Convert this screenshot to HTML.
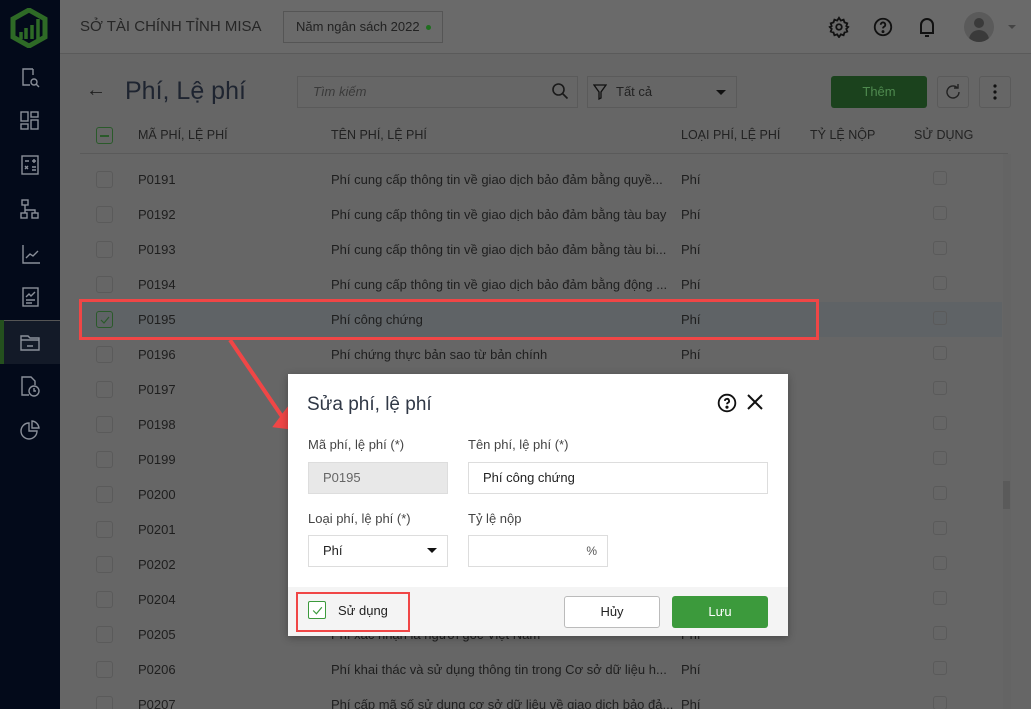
<!DOCTYPE html>
<html><head><meta charset="utf-8"><style>
*{box-sizing:border-box;margin:0;padding:0}
html,body{width:1031px;height:709px;overflow:hidden}
body{background:#666;font-family:"Liberation Sans",sans-serif;position:relative;color:#1e1e1e}
.a{position:absolute}
.sb{left:0;top:0;width:60px;height:709px;background:#030a1a}
.ic{position:absolute;left:19px;width:22px;height:22px}
.hdr{left:60px;top:0;width:971px;height:54px;background:#6a6a6a;border-bottom:1px solid #5a5a5a}
.cb{position:absolute;width:17px;height:17px;border:1px solid #5a5a5a;border-radius:3px}
.row{position:absolute;left:80px;width:922px;height:35px;font-size:13px;line-height:35px}
.row span{position:absolute}
.th{font-size:12.5px;color:#222;position:absolute;top:128px}
.m{left:288px;top:374px;width:500px;height:262px;background:#fff;box-shadow:0 2px 8px rgba(0,0,0,.3)}
.lbl{position:absolute;font-size:13px;color:#444}
.inp{position:absolute;height:32px;border:1px solid #ddd;font-size:13px;line-height:30px;padding-left:14px;color:#222}
</style></head><body>
<div class="a sb">
<svg class="a" style="left:10px;top:8px" width="38" height="40" viewBox="0 0 38 40"><path d="M19 2 L35 11 L35 29 L19 38 L3 29 L3 11 Z" fill="none" stroke="#2e6a26" stroke-width="5"/><path d="M11 31V24M16 31V20M22 31V17M28 31V11" stroke="#2e6a26" stroke-width="3.5"/></svg>
<svg class="ic" style="top:66px" viewBox="0 0 22 22" fill="none" stroke="#8a8f99" stroke-width="1.4"><path d="M14 3H4v16h7"/><path d="M14 3v6"/><circle cx="15" cy="16" r="3"/><path d="M17 18l3 3"/></svg>
<svg class="ic" style="top:110px" viewBox="0 0 22 22" fill="none" stroke="#8a8f99" stroke-width="1.4"><rect x="2" y="2" width="7" height="9"/><rect x="12" y="2" width="7" height="5"/><rect x="2" y="14" width="7" height="5"/><rect x="12" y="10" width="7" height="9"/></svg>
<svg class="ic" style="top:154px" viewBox="0 0 22 22" fill="none" stroke="#8a8f99" stroke-width="1.4"><rect x="3" y="2" width="16" height="18"/><path d="M6 7h4M13 7h4M15 5v4M6 12l3 3M9 12l-3 3M13 13h4M13 16h4"/></svg>
<svg class="ic" style="top:198px" viewBox="0 0 22 22" fill="none" stroke="#8a8f99" stroke-width="1.4"><rect x="3" y="2" width="6" height="5"/><rect x="2" y="15" width="6" height="5"/><rect x="13" y="15" width="6" height="5"/><path d="M6 7v5h10v3M6 12v3"/></svg>
<svg class="ic" style="top:243px" viewBox="0 0 22 22" fill="none" stroke="#8a8f99" stroke-width="1.4"><path d="M4 2v18h17"/><path d="M7 15l4-4 3 2 5-5"/></svg>
<svg class="ic" style="top:286px" viewBox="0 0 22 22" fill="none" stroke="#8a8f99" stroke-width="1.4"><rect x="4" y="2" width="15" height="18"/><path d="M7 11l3-3 2 2 4-4M7 14h9M7 17h6"/></svg>
<div class="a" style="left:0;top:320px;width:60px;height:44px;background:#131a28;border-top:1px solid #555"></div>
<div class="a" style="left:0;top:320px;width:4px;height:44px;background:#24501e"></div>
<svg class="ic" style="top:331px" viewBox="0 0 22 22" fill="none" stroke="#8a8f99" stroke-width="1.4"><path d="M2 5h7l2 2h9v12H2z"/><path d="M2 9h18M8 15h6"/></svg>
<svg class="ic" style="top:375px" viewBox="0 0 22 22" fill="none" stroke="#8a8f99" stroke-width="1.4"><path d="M10 20H3V2h9l4 4v4"/><circle cx="15" cy="16" r="5"/><path d="M15 13v3h2"/></svg>
<svg class="ic" style="top:419px" viewBox="0 0 22 22" fill="none" stroke="#8a8f99" stroke-width="1.4"><path d="M10 4a8 8 0 1 0 8 8h-8z"/><path d="M13 2a8 8 0 0 1 7 7h-7z"/></svg>
</div>
<div class="a hdr">
<div class="a" style="left:20px;top:18px;font-size:15px;color:#262626">SỞ TÀI CHÍNH TỈNH MISA</div>
<div class="a" style="left:223px;top:11px;width:160px;height:32px;border:1px solid #555;font-size:13px;line-height:30px;padding-left:12px;color:#222">Năm ngân sách 2022 <span style="display:inline-block;width:5px;height:5px;border-radius:50%;background:#1e6e1e;margin-left:3px;vertical-align:middle"></span></div>
<svg class="a" style="left:768px;top:16px" width="22" height="22" viewBox="0 0 24 24" fill="none" stroke="#111" stroke-width="2"><circle cx="12" cy="12" r="3"/><path d="M12 2l2 3 3-1 1 3 3 1-1 3 2 1-2 2 1 3-3 1-1 3-3-1-2 3-2-3-3 1-1-3-3-1 1-3-2-2 2-1-1-3 3-1 1-3 3 1z"/></svg>
<svg class="a" style="left:812px;top:16px" width="22" height="22" viewBox="0 0 24 24" fill="none" stroke="#111" stroke-width="2"><circle cx="12" cy="12" r="9"/><path d="M9.5 9.5a2.5 2.5 0 1 1 3.5 2.3c-.7.4-1 .9-1 1.7"/><circle cx="12" cy="17" r=".6" fill="#111"/></svg>
<svg class="a" style="left:857px;top:15px" width="20" height="24" viewBox="0 0 20 24" fill="none" stroke="#111" stroke-width="2"><path d="M4 18V10a6 6 0 0 1 12 0v8H3h14"/><path d="M8 21h4"/></svg>
<div class="a" style="left:904px;top:12px;width:30px;height:30px;border-radius:50%;background:#5a5a5a;overflow:hidden"><div class="a" style="left:10px;top:6px;width:10px;height:10px;border-radius:50%;background:#3a3a3a"></div><div class="a" style="left:5px;top:18px;width:20px;height:14px;border-radius:10px 10px 0 0;background:#3a3a3a"></div></div>
<div class="a" style="left:948px;top:25px;border:4px solid transparent;border-top:4px solid #444"></div>
</div>
<div class="a" style="left:86px;top:79px;font-size:20px;color:#1e1e1e">←</div>
<div class="a" style="left:125px;top:77px;font-size:25px;color:#1e2430">Phí, Lệ phí</div>
<div class="a" style="left:297px;top:76px;width:281px;height:32px;border:1px solid #5a5a5a;font-size:13px;font-style:italic;color:#3a3a3a;line-height:30px;padding-left:15px">Tìm kiếm</div>
<svg class="a" style="left:551px;top:82px" width="18" height="18" viewBox="0 0 18 18" fill="none" stroke="#1a1a1a" stroke-width="1.6"><circle cx="7.5" cy="7.5" r="5.5"/><path d="M11.5 11.5l5 5"/></svg>
<div class="a" style="left:587px;top:76px;width:150px;height:32px;border:1px solid #5a5a5a;font-size:13px;color:#222;line-height:30px;padding-left:28px">Tất cả</div>
<svg class="a" style="left:593px;top:84px" width="14" height="16" viewBox="0 0 14 16" fill="none" stroke="#111" stroke-width="1.3"><path d="M1 1h12L8 8v6L6 15V8z"/></svg>
<div class="a" style="left:716px;top:90px;border:5px solid transparent;border-top:5px solid #111"></div>
<div class="a" style="left:831px;top:76px;width:96px;height:32px;background:#1b421d;border-radius:3px;color:#4f8a4f;font-size:13px;text-align:center;line-height:32px">Thêm</div>
<div class="a" style="left:937px;top:76px;width:32px;height:32px;border:1px solid #5a5a5a;border-radius:3px"></div>
<svg class="a" style="left:944px;top:83px" width="18" height="18" viewBox="0 0 18 18" fill="none" stroke="#222" stroke-width="1.4"><path d="M15 9a6 6 0 1 1-2-4.5"/><path d="M14 1v4h-4"/></svg>
<div class="a" style="left:979px;top:76px;width:32px;height:32px;border:1px solid #5a5a5a;border-radius:3px"></div>
<svg class="a" style="left:992px;top:83px" width="6" height="18" viewBox="0 0 6 18" fill="#111"><circle cx="3" cy="3" r="1.6"/><circle cx="3" cy="9" r="1.6"/><circle cx="3" cy="15" r="1.6"/></svg>
<div class="cb" style="left:96px;top:127px;border:1px solid #2a5a2a"><div class="a" style="left:3px;top:7px;width:9px;height:1.5px;background:#2a5a2a"></div></div>
<div class="th" style="left:138px">MÃ PHÍ, LỆ PHÍ</div>
<div class="th" style="left:331px">TÊN PHÍ, LỆ PHÍ</div>
<div class="th" style="left:681px">LOẠI PHÍ, LỆ PHÍ</div>
<div class="th" style="left:810px">TỶ LỆ NỘP</div>
<div class="th" style="left:914px">SỬ DỤNG</div>
<div class="a" style="left:80px;top:153px;width:928px;height:1px;background:#5a5a5a"></div>
<div class="a" style="left:1003px;top:154px;width:8px;height:555px;background:#646464"></div>
<div class="a" style="left:1003px;top:481px;width:7px;height:28px;background:#5a5a5a"></div>
<div class="a" style="left:80px;top:302px;width:922px;height:35px;background:#5f6366"></div>
<div class="row" style="top:162px"><div class="cb" style="left:16px;top:9px"></div><span style="left:58px">P0191</span><span style="left:251px">Phí cung cấp thông tin về giao dịch bảo đảm bằng quyề...</span><span style="left:601px">Phí</span><div class="cb" style="left:853px;top:9px;width:14px;height:14px"></div></div>
<div class="row" style="top:197px"><div class="cb" style="left:16px;top:9px"></div><span style="left:58px">P0192</span><span style="left:251px">Phí cung cấp thông tin về giao dịch bảo đảm bằng tàu bay</span><span style="left:601px">Phí</span><div class="cb" style="left:853px;top:9px;width:14px;height:14px"></div></div>
<div class="row" style="top:232px"><div class="cb" style="left:16px;top:9px"></div><span style="left:58px">P0193</span><span style="left:251px">Phí cung cấp thông tin về giao dịch bảo đảm bằng tàu bi...</span><span style="left:601px">Phí</span><div class="cb" style="left:853px;top:9px;width:14px;height:14px"></div></div>
<div class="row" style="top:267px"><div class="cb" style="left:16px;top:9px"></div><span style="left:58px">P0194</span><span style="left:251px">Phí cung cấp thông tin về giao dịch bảo đảm bằng động ...</span><span style="left:601px">Phí</span><div class="cb" style="left:853px;top:9px;width:14px;height:14px"></div></div>
<div class="row" style="top:302px"><div class="cb" style="left:16px;top:9px;border-color:#2a5a2a"><svg class="a" style="left:2px;top:2px" width="12" height="12" viewBox="0 0 12 12" fill="none" stroke="#2a5a2a" stroke-width="1.2"><path d="M2 6l3 3 5-6"/></svg></div><span style="left:58px">P0195</span><span style="left:251px">Phí công chứng</span><span style="left:601px">Phí</span><div class="cb" style="left:853px;top:9px;width:14px;height:14px"></div></div>
<div class="row" style="top:337px"><div class="cb" style="left:16px;top:9px"></div><span style="left:58px">P0196</span><span style="left:251px">Phí chứng thực bản sao từ bản chính</span><span style="left:601px">Phí</span><div class="cb" style="left:853px;top:9px;width:14px;height:14px"></div></div>
<div class="row" style="top:372px"><div class="cb" style="left:16px;top:9px"></div><span style="left:58px">P0197</span><div class="cb" style="left:853px;top:9px;width:14px;height:14px"></div></div>
<div class="row" style="top:407px"><div class="cb" style="left:16px;top:9px"></div><span style="left:58px">P0198</span><div class="cb" style="left:853px;top:9px;width:14px;height:14px"></div></div>
<div class="row" style="top:442px"><div class="cb" style="left:16px;top:9px"></div><span style="left:58px">P0199</span><div class="cb" style="left:853px;top:9px;width:14px;height:14px"></div></div>
<div class="row" style="top:477px"><div class="cb" style="left:16px;top:9px"></div><span style="left:58px">P0200</span><div class="cb" style="left:853px;top:9px;width:14px;height:14px"></div></div>
<div class="row" style="top:512px"><div class="cb" style="left:16px;top:9px"></div><span style="left:58px">P0201</span><div class="cb" style="left:853px;top:9px;width:14px;height:14px"></div></div>
<div class="row" style="top:547px"><div class="cb" style="left:16px;top:9px"></div><span style="left:58px">P0202</span><div class="cb" style="left:853px;top:9px;width:14px;height:14px"></div></div>
<div class="row" style="top:582px"><div class="cb" style="left:16px;top:9px"></div><span style="left:58px">P0204</span><div class="cb" style="left:853px;top:9px;width:14px;height:14px"></div></div>
<div class="row" style="top:617px"><div class="cb" style="left:16px;top:9px"></div><span style="left:58px">P0205</span><span style="left:251px">Phí xác nhận là người gốc Việt Nam</span><span style="left:601px">Phí</span><div class="cb" style="left:853px;top:9px;width:14px;height:14px"></div></div>
<div class="row" style="top:652px"><div class="cb" style="left:16px;top:9px"></div><span style="left:58px">P0206</span><span style="left:251px">Phí khai thác và sử dụng thông tin trong Cơ sở dữ liệu h...</span><span style="left:601px">Phí</span><div class="cb" style="left:853px;top:9px;width:14px;height:14px"></div></div>
<div class="row" style="top:687px"><div class="cb" style="left:16px;top:9px"></div><span style="left:58px">P0207</span><span style="left:251px">Phí cấp mã số sử dụng cơ sở dữ liệu về giao dịch bảo đả...</span><span style="left:601px">Phí</span><div class="cb" style="left:853px;top:9px;width:14px;height:14px"></div></div>
<div class="a" style="left:79px;top:299px;width:740px;height:41px;border:3px solid #f04646"></div>
<svg class="a" style="left:225px;top:338px" width="70" height="92" viewBox="0 0 70 92"><path d="M5 2L58 80" stroke="#f04646" stroke-width="4"/><path d="M50 88L66 90L62 72Z" fill="#f04646" stroke="#f04646" stroke-width="3"/></svg>
<div class="a m">
<div class="a" style="left:19px;top:20px;font-size:19px;color:#303846">Sửa phí, lệ phí</div>
<svg class="a" style="left:429px;top:19px" width="20" height="20" viewBox="0 0 24 24" fill="none" stroke="#111" stroke-width="2.2"><circle cx="12" cy="12" r="10"/><path d="M9.5 9.5a2.5 2.5 0 1 1 3.5 2.3c-.7.4-1 .9-1 1.7"/><circle cx="12" cy="17" r=".8" fill="#111"/></svg>
<svg class="a" style="left:459px;top:20px" width="16" height="16" viewBox="0 0 16 16" stroke="#111" stroke-width="2"><path d="M1 1l14 14M15 1L1 15"/></svg>
<div class="lbl" style="left:20px;top:63px">Mã phí, lệ phí (*)</div>
<div class="lbl" style="left:180px;top:63px">Tên phí, lệ phí (*)</div>
<div class="inp" style="left:20px;top:88px;width:140px;background:#e8e8e8;color:#666">P0195</div>
<div class="inp" style="left:180px;top:88px;width:300px">Phí công chứng</div>
<div class="lbl" style="left:20px;top:137px">Loại phí, lệ phí (*)</div>
<div class="lbl" style="left:180px;top:137px">Tỷ lệ nộp</div>
<div class="inp" style="left:20px;top:161px;width:140px">Phí</div>
<div class="a" style="left:139px;top:174px;border:5px solid transparent;border-top:5px solid #111"></div>
<div class="inp" style="left:180px;top:161px;width:140px;text-align:right;padding-right:10px;font-size:12px;color:#555">%</div>
<div class="a" style="left:0;top:213px;width:500px;height:49px;background:#f4f4f4"></div>
<div class="a" style="left:20px;top:227px;width:18px;height:18px;border:1px solid #3c9a3c;border-radius:2px;background:#fff"><svg class="a" style="left:2px;top:2px" width="13" height="13" viewBox="0 0 12 12" fill="none" stroke="#3c9a3c" stroke-width="1.1"><path d="M2 6l3 3 5-6"/></svg></div>
<div class="a" style="left:50px;top:229px;font-size:13px;color:#222">Sử dụng</div>
<div class="a" style="left:8px;top:218px;width:114px;height:40px;border:2px solid #f04646"></div>
<div class="a" style="left:276px;top:222px;width:96px;height:32px;border:1px solid #bbb;border-radius:3px;background:#fff;text-align:center;line-height:30px;font-size:13px;color:#222">Hủy</div>
<div class="a" style="left:384px;top:222px;width:96px;height:32px;border-radius:3px;background:#3c9a3c;text-align:center;line-height:32px;font-size:13px;color:#fff">Lưu</div>
</div>
</body></html>
